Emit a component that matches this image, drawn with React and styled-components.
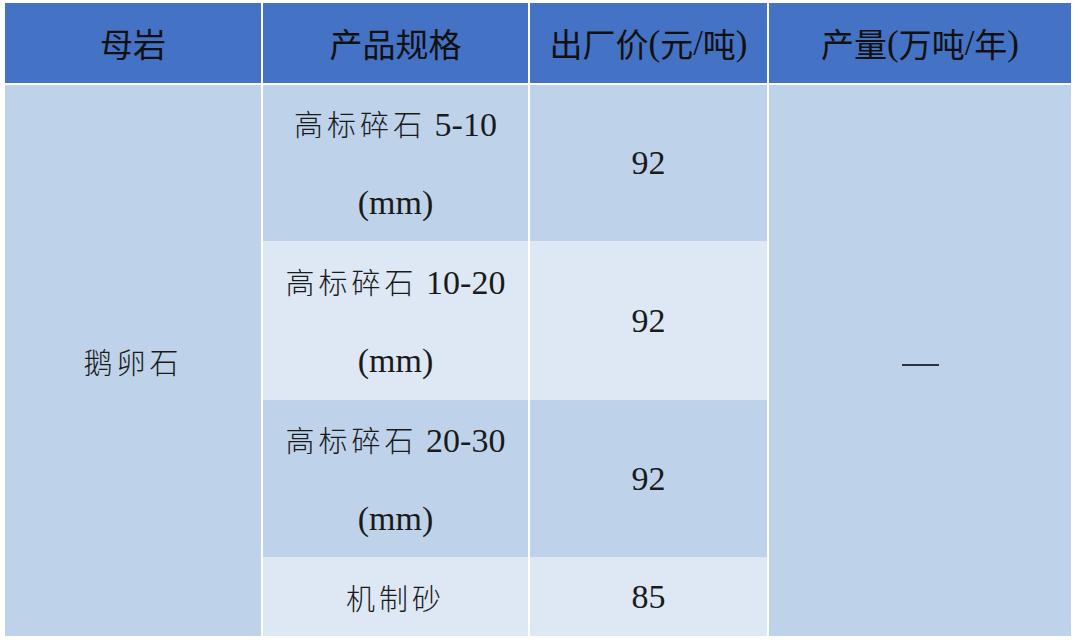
import styled, { createGlobalStyle } from 'styled-components'

const GlobalStyle = createGlobalStyle`
  html, body {
    margin: 0;
    padding: 0;
    background: #ffffff;
  }
`

const Page = styled.div`
  width: 1080px;
  height: 640px;
  padding: 3px 0 0 5px;
  box-sizing: border-box;
  background: #ffffff;
`

const Table = styled.div`
  display: grid;
  grid-template-columns: 256px 265px 237px 302px;
  grid-template-rows: 82px 156px 159px 157px 79px;
  column-gap: 2px;
  width: 1066px;
`

const HeadCell = styled.div`
  display: flex;
  align-items: center;
  justify-content: center;
  background: #4472c4;
  border-bottom: 2px solid #ffffff;
  box-sizing: border-box;
  color: #111111;
  font-family: "Noto Sans CJK SC", sans-serif;
  font-size: 33px;
  line-height: 1;
  white-space: pre;
`

// parentheses and slashes in the header are set in Times
const Roman = styled.span`
  font-family: "Liberation Serif", serif;
  font-size: 35px;
`

const Cell = styled.div`
  display: flex;
  align-items: center;
  justify-content: center;
  text-align: center;
  background: ${props => (props.$light ? '#dde8f4' : '#bed3ea')};
  color: #1a1a1a;
  font-family: "Liberation Serif", serif;
  font-size: 34px;
  line-height: 78px;
  ${props => props.$rows && `grid-row: span ${props.$rows};`}
`

const Han = styled.span`
  font-family: "Noto Sans CJK SC", sans-serif;
  font-weight: 300;
  font-size: 29px;
  letter-spacing: 4px;
`

const Dash = styled.span`
  display: block;
  width: 37px;
  height: 2px;
  margin-top: 8px;
  background: #2b3340;
`

const specs = [
  { size: '5-10', price: 92, light: false },
  { size: '10-20', price: 92, light: true },
  { size: '20-30', price: 92, light: false },
]

function App () {
  return (
    <Page>
      <GlobalStyle />
      <Table>
        <HeadCell>母岩</HeadCell>
        <HeadCell>产品规格</HeadCell>
        <HeadCell>出厂价<Roman>(</Roman>元<Roman>/</Roman>吨<Roman>)</Roman></HeadCell>
        <HeadCell>产量<Roman>(</Roman>万吨<Roman>/</Roman>年<Roman>)</Roman></HeadCell>

        <Cell $rows={4}><Han>鹅卵石</Han></Cell>
        {specs.map((s, i) => [
          <Cell key={s.size + 'a'} $light={s.light}>
            <div><Han>高标碎石</Han> {s.size}<br />(mm)</div>
          </Cell>,
          <Cell key={s.size + 'b'} $light={s.light}>{s.price}</Cell>,
          i === 0 ? <Cell key="dash" $rows={4}><Dash /></Cell> : null,
        ])}

        <Cell $light><Han>机制砂</Han></Cell>
        <Cell $light>85</Cell>
      </Table>
    </Page>
  )
}

export default App
